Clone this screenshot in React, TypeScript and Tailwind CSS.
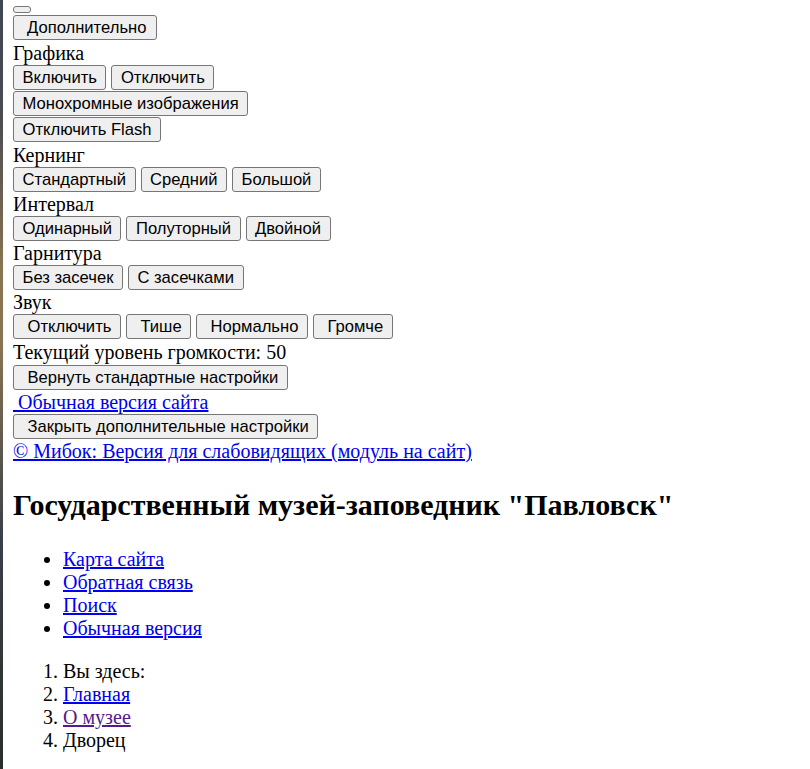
import React from "react";

const serif = "font-['Liberation_Serif','Times_New_Roman',serif]";

function Btn({
  children,
  wide = false,
}: {
  children?: React.ReactNode;
  wide?: boolean;
}) {
  return (
    <button
      className={`h-[25px] shrink-0 rounded-[3px] border border-[#767676] bg-[#efefef] text-[16.6px] leading-[23px] text-black font-['Liberation_Sans',Arial,sans-serif] ${
        wide ? "pl-[13.5px] pr-[8.5px]" : "px-[8.5px]"
      }`}
    >
      {children}
    </button>
  );
}

function Row({ children, gap = false }: { children: React.ReactNode; gap?: boolean }) {
  return <div className={`flex gap-[5px] ${gap ? "mb-px" : ""}`}>{children}</div>;
}

function Label({ children, h = "h-[24px]" }: { children: React.ReactNode; h?: string }) {
  return <div className={`${h} flex items-center text-[20px]`}>{children}</div>;
}

export default function App() {
  return (
    <div className={`flex min-h-[769px] bg-white text-black ${serif}`}>
      {/* decorative strip on the left edge */}
      <div className="w-[3px] shrink-0 bg-[linear-gradient(180deg,#3f4654_0%,#4a4c52_15%,#8a7350_35%,#8a7352_45%,#3a4048_70%,#2a2e2a_100%)]" />

      <div className="flex-1 pl-[10px]">
        <div className="pt-[6px]">
          <button className="block h-[7px] w-[18px] rounded-[3px] border border-[#767676] bg-[#efefef]" />
        </div>
        <div className="mt-[2px]">
          <button className="h-[25px] rounded-[3px] border border-[#767676] bg-[#efefef] pl-[13px] pr-[10px] text-[16.6px] leading-[23px] font-['Liberation_Sans',Arial,sans-serif]">
            Дополнительно
          </button>
        </div>

        <Label h="h-[25px]">Графика</Label>
        <Row gap>
          <Btn>Включить</Btn>
          <Btn>Отключить</Btn>
        </Row>
        <Row gap>
          <Btn>Монохромные изображения</Btn>
        </Row>
        <Row>
          <Btn>Отключить Flash</Btn>
        </Row>

        <Label h="h-[25px]">Кернинг</Label>
        <Row>
          <Btn>Стандартный</Btn>
          <Btn>Средний</Btn>
          <Btn>Большой</Btn>
        </Row>

        <Label>Интервал</Label>
        <Row>
          <Btn>Одинарный</Btn>
          <Btn>Полуторный</Btn>
          <Btn>Двойной</Btn>
        </Row>

        <Label>Гарнитура</Label>
        <Row>
          <Btn>Без засечек</Btn>
          <Btn>С засечками</Btn>
        </Row>

        <Label>Звук</Label>
        <Row>
          <Btn wide>Отключить</Btn>
          <Btn wide>Тише</Btn>
          <Btn wide>Нормально</Btn>
          <Btn wide>Громче</Btn>
        </Row>

        <Label h="h-[26px]">Текущий уровень громкости: 50</Label>
        <Row>
          <Btn wide>Вернуть стандартные настройки</Btn>
        </Row>

        <Label>
          <a href="#" className="text-[#0000ee] underline">
            {"\u00a0"}Обычная версия сайта
          </a>
        </Label>
        <Row>
          <Btn wide>Закрыть дополнительные настройки</Btn>
        </Row>

        <Label>
          <a href="#" className="text-[#0000ee] underline">
            © Мибок: Версия для слабовидящих (модуль на сайт)
          </a>
        </Label>

        <h1 className="mt-[24px] text-[30px] font-bold leading-[35px]">
          Государственный музей-заповедник "Павловск"
        </h1>

        <ul className="mt-[26px] list-disc pl-[50px] text-[20px] leading-[23px]">
          <li>
            <a href="#" className="text-[#0000ee] underline">Карта сайта</a>
          </li>
          <li>
            <a href="#" className="text-[#0000ee] underline">Обратная связь</a>
          </li>
          <li>
            <a href="#" className="text-[#0000ee] underline">Поиск</a>
          </li>
          <li>
            <a href="#" className="text-[#0000ee] underline">Обычная версия</a>
          </li>
        </ul>

        <ol className="mt-[20px] list-decimal pl-[50px] text-[20px] leading-[23px]">
          <li>Вы здесь:</li>
          <li>
            <a href="#" className="text-[#0000ee] underline">Главная</a>
          </li>
          <li>
            <a href="#" className="text-[#551a8b] underline">О музее</a>
          </li>
          <li>Дворец</li>
        </ol>
      </div>
    </div>
  );
}
